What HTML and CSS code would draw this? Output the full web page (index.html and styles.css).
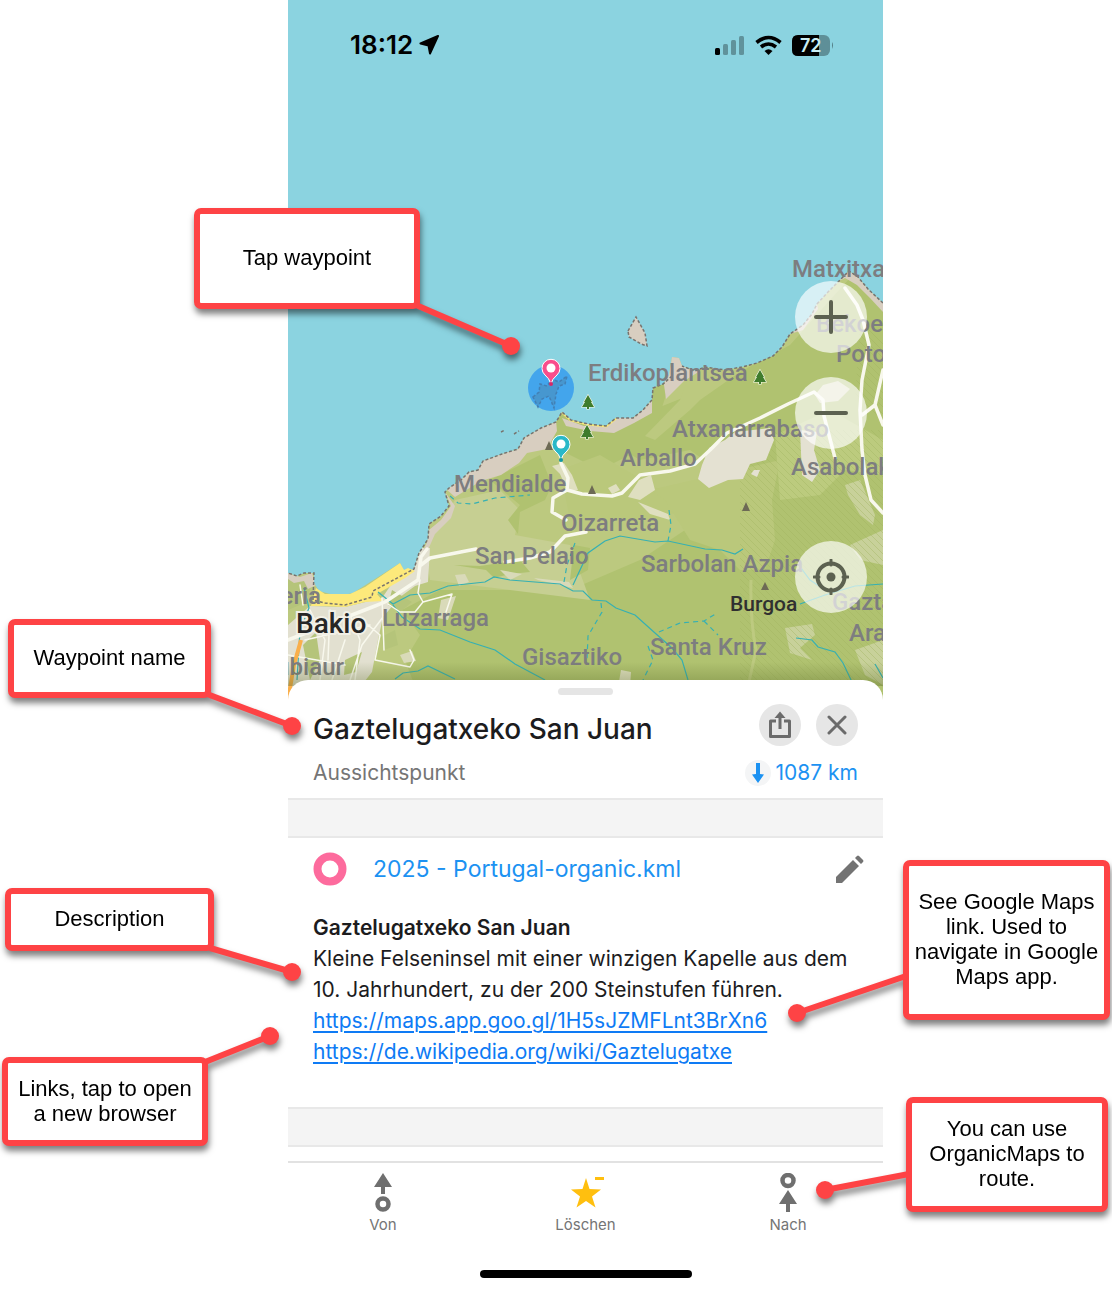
FILE: index.html
```html
<!DOCTYPE html>
<html lang="de">
<head>
<meta charset="utf-8">
<meta name="viewport" content="width=device-width, initial-scale=1">
<title>Gaztelugatxeko San Juan</title>
<link rel="stylesheet" href="styles.css">
</head>
<body>
<div class="guide">
<main class="phone">
  <section class="map" aria-label="Karte">
    <svg class="map-canvas" viewBox="288 0 595 700" preserveAspectRatio="xMidYMin slice">
      <defs>
        <clipPath id="land-clip"><path d="M883 303L868 289 858 277 849 271 839 281 828 292 817 304 812 314 803 325 790 334 782 347 773 356 757 363 742 367 725 370 705 367 695 371 682 366 679 358 672 357 669 375 663 384 653 388 652 400 643 410 633 418 616 418 606 426 588 424 571 420 562 412 556 422 541 428 524 438 518 449 502 454 483 461 478 470 469 472 461 480 449 488 445 492 449 506 441 516 429 524 428 539 419 553 414 569 405 573 400 563 353 593 338 596 319 591 314 583 314 573 304 573 297 576 288 573V700H883Z"/></clipPath>
        <pattern id="hatch" width="7" height="7" patternUnits="userSpaceOnUse"><path d="M0 0L7 7" stroke="#9fb35f" stroke-width="1" opacity=".4"/></pattern>
        <linearGradient id="fade" x1="0" y1="0" x2="0" y2="1"><stop offset="0" stop-color="#506020" stop-opacity="0"/><stop offset="1" stop-color="#506020" stop-opacity=".35"/></linearGradient>
      </defs>
      <rect x="-200" y="0" width="1600" height="700" fill="#8bd3e0"/>
      <path d="M883 303L868 289 858 277 849 271 839 281 828 292 817 304 812 314 803 325 790 334 782 347 773 356 757 363 742 367 725 370 705 367 695 371 682 366 679 358 672 357 669 375 663 384 653 388 652 400 643 410 633 418 616 418 606 426 588 424 571 420 562 412 556 422 541 428 524 438 518 449 502 454 483 461 478 470 469 472 461 480 449 488 445 492 449 506 441 516 429 524 428 539 419 553 414 569 405 573 400 563 353 593 338 596 319 591 314 583 314 573 304 573 297 576 288 573V700H883Z" fill="#bcc97f"/>
      <g clip-path="url(#land-clip)">
        <path d="M790 345L830 300 850 278 883 310V700H420L405 660 420 635 402 610 440 590 570 590 640 560 700 520 760 500 690 450 640 460 590 430 600 420 640 415 690 395 740 372Z" fill="#b0c270"/>
        <path d="M560 415L670 382 655 430 640 450 600 470 560 450 540 430Z" fill="#b0c270"/>
        <path d="M690 372L740 372 700 400 690 410 655 440 645 436 680 400Z" fill="#bcc97f"/>
        <path d="M455 500L500 490 520 510 515 535 570 545 590 600 470 585 430 580 425 550Z" fill="#c6cf92"/>
        <path d="M490 480L540 455 552 485 545 500 520 512 518 534 508 520 520 505Z" fill="#b0c270"/>
        <path d="M560 470L600 455 660 490 700 480 720 500 650 520 570 520Z" fill="#bac87b"/>
        <path d="M650 490L780 460 772 500 775 540 765 570 740 570 720 550 690 540 665 500Z" fill="#bac87b"/>
        <path d="M454 565L480 566 520 560 530 572 510 574 494 578 486 570Z M574 545L590 548 588 570 570 580Z" fill="#b0c270"/>
        <path d="M775 435L830 410 883 440V475L845 470 820 495 780 500Z" fill="#bccb7e"/>
        <path d="M845 485L860 480 875 515 873 525 860 515 848 495Z M850 545L883 530V565L860 560Z M785 628L812 624 815 635 800 648 812 660 790 653Z M855 650L883 640V685L865 675Z" fill="#c8d19a"/>
        <path d="M740 430H883V700H740Z" fill="url(#hatch)"/>
        <path d="M860 320L883 340V420L855 400Z" fill="url(#hatch)"/>
        <path d="M709 448L725 440 735 432 770 428 774 440 766 460 750 464 743 479 728 480 709 488 698 479 702 465Z M800 430L817 432 814 450 820 470 812 482 802 475Z M754 470L760 470 757 477 751 474Z" fill="#e4e1d2"/>
        <path d="M823 385l15-4 12 8-12 12-18 2-5-8ZM639 480l12-5 4 15-15 10-12-3ZM638 502l30 12 2 6-20-6ZM608 488l8-4 4 6-8 4ZM552 466l12-3 8 12 6 15-10 2-8-18ZM615 705l6-35 10 2-2 30Z" fill="#dfdfc0"/>
        <path d="M288 625L310 606 345 607 382 598 400 572 416 548 430 548 428 582 415 586 400 597 383 617 378 640 372 672 350 700H288Z" fill="#e2e0d0"/>
        <path d="M288 578L314 578 308 595 300 605 288 610Z M303 645L316 632 320 660 310 680Z M345 660L362 652 356 672 344 675Z M381 637L395 630 398 645 384 650Z M392 590L412 602 400 612 388 605Z" fill="#b5c47a"/>
        <path d="M441 600l15-4-8 24-10-2ZM534 578l35 4 4 6-35-8ZM400 655l12-4 4 10-12 2ZM455 575l10-1 4 8-10 4ZM500 570l22 4-12 6Z" fill="#d9dab9"/>
        <path d="M883 303L868 289 858 277 849 271 835 283 845 278 857 285 870 298 883 312ZM817 304L811 314 803 325 790 334 803 330 818 309ZM672 355l12 0 0 12 16 4-16 10-18 18-2-14ZM652 400l-12 10-24 8-10 8-22 0-22-8 4 8 24 5 24 2 20-10 18-10ZM556 420l-16 8-17 10-5 11-17 5-20 7-5 9-9 3-8 7-13 9 9 8 26-16 20-6 18-12 8-10 20-4 10-18ZM445 492l6 14-10 14-12 10-2 12-8 18 8-8 8-18 16-16 4-12Z M288 573l12 4 12-4 4 12-8 4-4-8-10 2-6-4Z" fill="#d8cec0"/>
        <path d="M562 412l9 8 17 4 18 2 10-8" fill="none" stroke="#f8e57c" stroke-width="3"/>
      </g>
      <path d="M316 588L325 594 350 594 365 587 400 563 404 570 408 568 415 571 405 578 377 594 383 601 365 602 345 607 325 606 311 606Z" fill="#fde97b"/>
      <path d="M628 331L636 317 645 333 647 346 641 344 629 337Z" fill="#d8cec0" stroke="#77736e" stroke-width="1.500" stroke-dasharray="3 2"/>
      <g fill="none" stroke="#77736e" stroke-width="1.500" stroke-dasharray="3 2">
        <path d="M883 303L868 289 858 277 849 271 839 281 828 292 817 304 812 314 803 325 790 334 782 347 773 356 757 363 742 367 725 370 705 367 695 371 682 366"/>
        <path d="M672 376L663 384 653 388 652 400 643 410 633 418 616 418 606 426 588 424 571 420 562 412 556 422 541 428 524 438 518 449 502 454 483 461 478 470 469 472 461 480 449 488 445 492 449 506 441 516 429 524 428 539 419 553 414 569 373 591 372 597 345 605 325 603 313 600 314 573 304 573 297 576 288 573"/>
        <path d="M514 434l5-3M501 432l4-2"/>
      </g>
      <g fill="none" stroke="#35b0b3" stroke-width="1.200">
        <path d="M378 592L393 604 410 595 430 593 448 586 485 582 494 577 510 580 560 584 573 591 583 591 592 600 606 601 616 608 635 615 655 633 672 648 682 660 688 680 M393 605L402 617 420 629 440 630 470 642 495 650 515 664 545 680 M395 679L403 673 418 671 428 666 455 679 M573 585L580 570 588 553 605 541 620 536 655 542 668 541 705 549 722 550 735 554 743 549 M800 604L825 595 855 586 883 584 M801 568L810 580 822 588 M796 638L812 640 818 647 835 652 843 663 852 682 M304 588L309 608 300 630 297 680 M875 664L883 678"/>
        <path stroke-dasharray="5 4" d="M450 496L458 503 472 504 495 498 530 495 M669 510L671 525 668 541 M564 582L567 565 575 543 M601 603L602 612 588 636 587 660 M659 632L680 623 704 621 717 613 M704 621L718 635 M648 646L653 660 642 682"/>
      </g>
      <g fill="none" stroke="#f8f8ed" stroke-linejoin="round" stroke-linecap="round">
        <path stroke-width="3.500" d="M288 640L375 606 385 602 418 580 421 557 427 549 M421 565L430 558 476 549 M561 463L568 478 567 490 582 494 612 496 622 493 640 475 670 471 695 464 710 450 727 433 760 418 788 404 814 392 823 400 824 416 835 458 M567 490L553 498 552 512 566 520 M586 532L565 536 550 552 530 558 505 562 M845 288L857 305 863 320 869 345 862 380 860 410 862 450 865 475 871 500 883 513 M883 370L875 405 862 415 M875 405L883 425"/>
        <path stroke-width="1.500" d="M420 580L418 593 423 602 452 594 446 612 M423 602L415 612 400 612 388 604 M310 610L325 640 320 680 M330 610L328 660 M350 615L360 640 355 680 M362 620L380 635 375 660 410 667 414 660 410 650 M383 617L362 645 350 680 M345 640L332 680 M300 585L303 605 M305 640L370 625 M288 655L345 665 M382 598L384 650"/>
      </g>
      <path d="M751 580Q750 620 756 650L745 700" fill="none" stroke="#bdca80" stroke-width="3"/>
      <path d="M301 640L294 665 288 700" fill="none" stroke="#faaf4a" stroke-width="4"/>
      <g fill="#6d6a55"><path d="M592 485l4 9h-8ZM746 502l4 9h-8ZM765 582l4 8h-8ZM549 441l4 9h-8Z"/></g>
      <g fill="#3f7c2c" stroke="#f6f7e8" stroke-width="1.200" paint-order="stroke"><path d="M588 395l4 7h-1l3 5h-5v2h-2v-2h-5l3-5h-1ZM587 425l4 7h-1l3 5h-5v2h-2v-2h-5l3-5h-1ZM760 370l4 7h-1l3 5h-5v2h-2v-2h-5l3-5h-1Z"/></g>
      <g class="place">
        <text x="792" y="277">Matxitxa</text>
        <text x="816" y="332">Bekoet</text>
        <text x="836" y="362">Poto</text>
        <text x="588" y="381">Erdikoplantsea</text>
        <text x="672" y="437">Atxanarrabaso</text>
        <text x="620" y="466">Arballo</text>
        <text x="791" y="475">Asabolak</text>
        <text x="454" y="492">Mendialde</text>
        <text x="561" y="531">Oizarreta</text>
        <text x="475" y="564">San Pelaio</text>
        <text x="641" y="572">Sarbolan Azpia</text>
        <text x="382" y="626">Luzarraga</text>
        <text x="522" y="665">Gisaztiko</text>
        <text x="650" y="655">Santa Kruz</text>
        <text x="832" y="610">Gazta</text>
        <text x="849" y="641">Ara</text>
        <text x="321" y="604" text-anchor="end">eria</text>
        <text x="344" y="675" text-anchor="end">ubiaur</text>
        <text class="peak" x="730" y="611">Burgoa</text>
        <text class="town" x="296" y="633">Bakio</text>
      </g>
      <circle cx="551" cy="388" r="23" fill="#43a5ec"/>
      <path d="M533 397l6-5 1-8 7 2 5-7 7 3 8-6-2 8-6 2-3 8-2 14-5-12-7 3-4 8Z" fill="#4797cf" stroke="#4280b5" stroke-width="1.500" stroke-dasharray="3 2"/>
      <g>
        <path d="M551 384q-2-6-6-9a9 9 0 1 1 12 0q-5 4-6 9Z" fill="#f94d8c" stroke="#fff" stroke-width="1"/><circle cx="551" cy="368" r="4.500" fill="#fff"/><circle cx="551" cy="384" r="2" fill="#d52968"/>
        <path d="M561 460q-2-6-6-9a9 9 0 1 1 12 0q-5 4-6 9Z" fill="#29b8c8" stroke="#fff" stroke-width="1"/><circle cx="561" cy="444" r="4.500" fill="#fff"/><circle cx="561" cy="460" r="2" fill="#1097a5"/>
      </g>
      <rect x="-200" y="662" width="1600" height="24" fill="url(#fade)"/>
    </svg>
    <div class="status">
      <span class="clock">18:12</span>
      <svg class="arrow" width="20" height="20" viewBox="0 0 20 20"><path d="M19 1L1.500 8.500 9.500 10.500 11 18.500Z" stroke="#000" stroke-width="2" stroke-linejoin="round"/></svg>
      <svg class="signals" width="120" height="22" viewBox="0 0 120 22">
        <rect x="2" y="14" width="5" height="7" rx="1.500"/>
        <g opacity=".3"><rect x="10" y="10" width="5" height="11" rx="1.500"/><rect x="18" y="6" width="5" height="15" rx="1.500"/><rect x="26" y="2" width="5" height="19" rx="1.500"/></g>
        <g fill="none" stroke="#000" stroke-width="3.600"><path d="M43.500 8.500Q55.500-1.500 67.500 8.500M48 13Q55.500 7 63 13"/></g><path d="M51.500 17Q55.500 13.500 59.500 17L55.500 21Z"/>
        <rect x="79" y="1" width="38" height="21" rx="6" opacity=".32"/><path d="M85 1H106V22H85Q79 22 79 16V7Q79 1 85 1Z"/><path d="M119 8q2 3 0 7Z" opacity=".4"/>
        <text class="battery" x="87" y="18">72</text>
      </svg>
    </div>
    <button class="round zoom-in" aria-label="Vergrößern"><svg width="34" height="34" viewBox="0 0 34 34"><path d="M17 2V32M2 17H32"/></svg></button>
    <button class="round zoom-out" aria-label="Verkleinern"><svg width="34" height="34" viewBox="0 0 34 34"><path d="M2 17H32"/></svg></button>
    <button class="round locate" aria-label="Mein Standort"><svg width="36" height="36" viewBox="0 0 36 36"><circle cx="18" cy="18" r="13.500"/><path d="M18 1V6M18 30V35M1 18H6M30 18H35" stroke-width="3"/><circle cx="18" cy="18" r="4.500" fill="#5c6150" stroke="none"/></svg></button>
  </section>

  <section class="sheet">
    <div class="handle"></div>
    <header class="head">
      <h1>Gaztelugatxeko San Juan</h1>
      <button class="icon-btn" aria-label="Teilen"><svg width="24" height="28" viewBox="0 0 24 28"><path d="M8 10H2.500V25.500H21.500V10H16M12 18V3" fill="none" stroke="#6b6b6b" stroke-width="3" stroke-linejoin="round"/><path d="M6.500 7L12 .5 17.500 7Z" fill="#6b6b6b"/></svg></button>
      <button class="icon-btn" aria-label="Schließen"><svg width="20" height="20" viewBox="0 0 20 20"><path d="M2 2L18 18M18 2L2 18" stroke="#6b6b6b" stroke-width="3" stroke-linecap="round"/></svg></button>
    </header>
    <div class="meta">
      <span>Aussichtspunkt</span>
      <span class="distance"><svg width="26" height="26" viewBox="0 0 26 26"><circle cx="13" cy="13" r="13" fill="#f4f5f6"/><path d="M11 3H15V14L19 14.500 13 23 7 14.500 11 14Z" fill="#1c92f2"/></svg>1087 km</span>
    </div>
    <div class="band"></div>
    <div class="list-row">
      <svg width="34" height="34" viewBox="0 0 34 34"><circle cx="17" cy="17" r="12.500" fill="none" stroke="#fd6b9d" stroke-width="8"/></svg>
      <a class="list-name" href="#list">2025 - Portugal-organic.kml</a>
      <button class="plain" aria-label="Bearbeiten"><svg width="28" height="28" viewBox="0 0 28 28" fill="#737373"><path d="M0 22L17 5 23 11 6 28H0ZM19 3L21 1Q22 0 23 1L27 5Q28 6 27 7L25 9Z"/></svg></button>
    </div>
    <article class="note">
      <h2>Gaztelugatxeko San Juan</h2>
      <p>Kleine Felseninsel mit einer winzigen Kapelle aus dem 10. Jahrhundert, zu der 200 Steinstufen führen.</p>
      <a href="https://maps.app.goo.gl/1H5sJZMFLnt3BrXn6">https://maps.app.goo.gl/1H5sJZMFLnt3BrXn6</a>
      <a href="https://de.wikipedia.org/wiki/Gaztelugatxe">https://de.wikipedia.org/wiki/Gaztelugatxe</a>
    </article>
    <div class="band"></div>
    <nav class="tabs">
      <button class="tab"><svg width="20" height="40" viewBox="0 0 20 40"><path d="M10 0L19 14H12V21H8V14H1Z" fill="#6f6f6f"/><circle cx="10" cy="31" r="5.500" fill="none" stroke="#6f6f6f" stroke-width="4.500"/></svg>Von</button>
      <button class="tab"><svg width="38" height="40" viewBox="0 0 38 40"><path d="M19 5L22.500 16 34 16.500 25 23.500 28.500 34.500 19 28 9.500 34.500 13 23.500 4 16.500 15.500 16ZM28 4H37V7H28Z" fill="#ffbf0f"/></svg>Löschen</button>
      <button class="tab"><svg width="20" height="40" viewBox="0 0 20 40"><path d="M10 17L19 31H12V39H8V31H1Z" fill="#6f6f6f"/><circle cx="10" cy="7.500" r="5.500" fill="none" stroke="#6f6f6f" stroke-width="4.500"/></svg>Nach</button>
    </nav>
    <div class="home"></div>
  </section>
</main>

<aside class="callout tap">Tap waypoint<svg class="pointer"><path d="M222 97L317 138"/><circle cx="317" cy="138" r="9"/></svg></aside>
<aside class="callout name">Waypoint name<svg class="pointer"><path d="M199 75L284 107"/><circle cx="284" cy="107" r="9"/></svg></aside>
<aside class="callout desc">Description<svg class="pointer"><path d="M205 60L287 84"/><circle cx="287" cy="84" r="9"/></svg></aside>
<aside class="callout links">Links, tap to open a new browser<svg class="pointer"><path d="M203 5L268 -21"/><circle cx="268" cy="-21" r="9"/></svg></aside>
<aside class="callout google">See Google Maps link. Used to navigate in Google Maps app.<svg class="pointer"><path d="M3 116L-106 153"/><circle cx="-106" cy="153" r="9"/></svg></aside>
<aside class="callout route">You can use OrganicMaps to route.<svg class="pointer"><path d="M3 77L-81 93"/><circle cx="-81" cy="93" r="9"/></svg></aside>
</div>
</body>
</html>
```
FILE: styles.css
```css
* { box-sizing: border-box; }
body { margin: 0; background: #fff; font-family: Inter, "Liberation Sans", sans-serif; color: #1c1c1e; }
button { border: 0; padding: 0; background: none; font: inherit; color: inherit; display: flex; align-items: center; justify-content: center; }
svg { display: block; flex: none; }

.guide { position: relative; padding: 0 229px 0 288px; }
.phone { min-width: 0; }

.map { position: relative; height: 700px; overflow: hidden; background: #8bd3e0; }
.map-canvas { width: 100%; height: 100%; }
.place { font: 500 24px Roboto, sans-serif; fill: #7d7d80; }
.place .peak { font-size: 21px; fill: #303030; }
.place .town { font-size: 28px; fill: #262626; stroke: #f2f0e6; stroke-width: 4px; paint-order: stroke; }

.status { position: absolute; inset: 0 0 auto; height: 90px; padding: 0 50px 0 62px; display: flex; align-items: center; gap: 6px; color: #000; }
.clock { font-size: 26px; font-weight: 600; line-height: 30px; }
.signals { margin-left: auto; }
.battery { font: 600 18px Inter, sans-serif; fill: #c9edf3; }

.round { position: absolute; right: 16px; width: 72px; height: 72px; border-radius: 50%; background: rgba(255, 255, 255, .66); }
.round svg { fill: none; stroke: #5c6150; stroke-width: 4; stroke-linecap: round; }
.zoom-in { top: 281px; }
.zoom-out { top: 377px; }
.locate { top: 541px; }

.sheet { position: relative; margin-top: -20px; padding-top: 8px; border-radius: 20px 20px 0 0; background: #fff; }
.handle { width: 55px; height: 7px; margin: 0 auto; border-radius: 4px; background: #e5e5e5; }
.head { display: flex; align-items: center; gap: 15px; padding: 5px 25px 0; }
h1 { flex: 1; margin: 0; font-size: 28px; font-weight: 500; line-height: 42px; padding-top: 8px; white-space: nowrap; }
.icon-btn { width: 42px; height: 42px; border-radius: 50%; background: #e6e6e6; }
.meta { display: flex; align-items: center; justify-content: space-between; height: 45px; margin-bottom: 3px; padding: 0 25px; font-size: 21px; color: #757575; }
.distance { display: flex; align-items: center; gap: 5px; color: #1c92f2; }
.band { height: 40px; border: solid #e8e8e8; border-width: 2px 0; background: #f4f4f4; }

.list-row { display: flex; align-items: center; height: 62px; padding: 0 19px 0 25px; }
.list-name { flex: 1; margin-left: 26px; font-size: 23px; color: #1c92f2; text-decoration: none; }
.note { padding: 12px 25px 40px; font-size: 21px; line-height: 31px; }
.note h2 { margin: 0; font-size: 21px; font-weight: 600; line-height: 31px; }
.note p { margin: 0; }
.note a { display: block; color: #0e7bf5; text-decoration-thickness: 2px; text-underline-offset: 3px; }

.tabs { display: flex; justify-content: space-between; margin-top: 14px; padding: 10px 40px 0; border-top: 2px solid #e2e2e2; }
.tab { width: 110px; flex-direction: column; gap: 2px; font-size: 15px; line-height: 20px; color: #757575; }
.home { width: 212px; height: 8px; margin: 35px auto 11px; border-radius: 4px; background: #000; }

.callout { position: absolute; display: flex; align-items: center; justify-content: center; padding-bottom: 2px; border: 6px solid #fe4345; border-radius: 7px; background: #fff; color: #000; font: 22px/25px "Liberation Sans", Arial, sans-serif; text-align: center; filter: drop-shadow(1px 5px 3px rgba(0, 0, 0, .5)); }
.pointer { position: absolute; left: -6px; top: -6px; width: 1px; height: 1px; overflow: visible; fill: #fe4345; stroke: #fe4345; stroke-width: 6; }
.pointer circle { stroke: none; }
.tap { left: 194px; top: 208px; width: 226px; height: 101px; }
.name { left: 8px; top: 619px; width: 203px; height: 79px; }
.desc { left: 5px; top: 888px; width: 209px; height: 63px; }
.links { left: 2px; top: 1057px; width: 206px; height: 89px; padding: 0 8px 2px; }
.google { right: 2px; top: 860px; width: 207px; height: 160px; }
.route { right: 4px; top: 1097px; width: 202px; height: 115px; padding: 0 8px 2px; }
```
